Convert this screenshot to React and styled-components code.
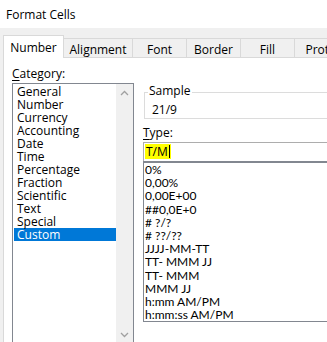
import React from 'react';
import styled, { createGlobalStyle } from 'styled-components';

const Global = createGlobalStyle`
  html, body { margin: 0; padding: 0; background: #fff; overflow: hidden; }
  body {
    font-family: "Open Sans", "Noto Sans", "DejaVu Sans", sans-serif;
    font-size: 12px;
    color: #000;
  }
`;

const Window = styled.div`
  width: 420px;
  height: 342px;
  display: flex;
  flex-direction: column;
  background: #f0f0f0;
`;

const TitleBar = styled.div`
  height: 28px;
  flex: none;
  background: #fff;
  padding-left: 6px;
  display: flex;
  align-items: center;
  font-size: 12px;
`;

const Body = styled.div`
  flex: 1;
  min-height: 0;
  padding: 7px 0 0 3px;
  display: flex;
  flex-direction: column;
`;

const Tabs = styled.div`
  display: flex;
  align-items: flex-end;
  height: 22px;
  flex: none;
  position: relative;
  z-index: 1;
`;

const Tab = styled.div`
  box-sizing: border-box;
  flex: none;
  width: ${p => p.$w}px;
  height: ${p => (p.$active ? 23 : 19)}px;
  margin-bottom: ${p => (p.$active ? -1 : 0)}px;
  background: ${p => (p.$active ? '#fff' : '#f0f0f0')};
  border-top: 1px solid #d9d9d9;
  border-right: 1px solid #d9d9d9;
  border-left: ${p => (p.$first ? '1px solid #d9d9d9' : 'none')};
  display: flex;
  justify-content: center;
  padding-top: ${p => (p.$active ? 4 : 3)}px;
  line-height: 15px;
  white-space: nowrap;
  overflow: hidden;
`;

const Panel = styled.div`
  flex: 1;
  min-height: 0;
  background: #fff;
  border-top: 1px solid #d9d9d9;
  border-left: 1px solid #d9d9d9;
  padding: 8px 0 0 8px;
  display: flex;
  gap: 9px;
`;

const LeftCol = styled.div`
  width: 122px;
  flex: none;
  display: flex;
  flex-direction: column;
`;

const Label = styled.div`
  height: 17px;
  line-height: 15px;
  flex: none;
  u { text-decoration: underline; text-underline-offset: 2px; }
`;

const CategoryBox = styled.div`
  flex: 1;
  box-sizing: border-box;
  border: 1px solid #828790;
  border-bottom: none;
  display: flex;
  min-height: 0;
`;

const CategoryItems = styled.div`
  flex: 1;
  padding: 1px 0 0 1px;
`;

const CategoryItem = styled.div`
  height: 13px;
  line-height: 13px;
  padding-left: 3px;
  background: ${p => (p.$selected ? '#0078d7' : 'transparent')};
  color: ${p => (p.$selected ? '#fff' : '#000')};
  white-space: nowrap;
`;

const ScrollBar = styled.div`
  width: 17px;
  flex: none;
  background: #f0f0f0;
  display: flex;
  flex-direction: column;
  justify-content: space-between;
  align-items: center;
  padding: 6px 0 4px;
`;

const RightCol = styled.div`
  flex: 1;
  display: flex;
  flex-direction: column;
  padding-top: 26px;
`;

const GroupBox = styled.div`
  position: relative;
  box-sizing: border-box;
  height: 27px;
  margin-left: 1px;
  border: 1px solid #dcdcdc;
  padding: 9px 0 0 7px;
  flex: none;
`;

const GroupLegend = styled.span`
  position: absolute;
  top: -10px;
  left: 3px;
  padding: 0 2px 0 1px;
  line-height: 15px;
  background: #fff;
`;

const SampleValue = styled.div`
  line-height: 15px;
`;

const TypeLabel = styled(Label)`
  margin-top: 6px;
`;

const TypeInput = styled.div`
  box-sizing: border-box;
  height: 19px;
  flex: none;
  border: 1px solid #adadad;
  border-bottom: none;
  padding: 1px 0 0 1px;
  display: flex;
  align-items: flex-start;
`;

const Highlight = styled.span`
  background: #ffff00;
  height: 15px;
  line-height: 15px;
  padding: 0 1px 0 1px;
  display: inline-flex;
  align-items: center;
`;

const Caret = styled.span`
  display: inline-block;
  width: 1px;
  height: 13px;
  background: #000;
  margin-left: 1px;
`;

const TypeList = styled.div`
  box-sizing: border-box;
  height: 161px;
  flex: none;
  border: 1px solid #828790;
  border-top-width: 2px;
  padding: 0 0 0 1px;
  font-family: Lato, "Open Sans", sans-serif;
`;

const TypeItem = styled.div`
  height: 13.2px;
  line-height: 13.2px;
  white-space: nowrap;
`;

const Chevron = ({ up }) => (
  <svg width="9" height="6" viewBox="0 0 9 6">
    <path
      d={up ? 'M1 5 L4.5 1.5 L8 5' : 'M1 1 L4.5 4.5 L8 1'}
      fill="none"
      stroke="#a0a0a0"
      strokeWidth="1.3"
    />
  </svg>
);

const tabs = [
  { label: 'Number', w: 61 },
  { label: 'Alignment', w: 69 },
  { label: 'Font', w: 54 },
  { label: 'Border', w: 54 },
  { label: 'Fill', w: 54 },
  { label: 'Protection', w: 80 },
];

const categories = [
  'General', 'Number', 'Currency', 'Accounting', 'Date', 'Time',
  'Percentage', 'Fraction', 'Scientific', 'Text', 'Special', 'Custom',
];

const types = [
  '0%', '0,00%', '0,00E+00', '##0,0E+0', '# ?/?', '# ??/??',
  'JJJJ-MM-TT', 'TT- MMM JJ', 'TT- MMM', 'MMM JJ', 'h:mm AM/PM', 'h:mm:ss AM/PM',
];

export default function App() {
  return (
    <>
      <Global />
      <Window>
        <TitleBar>Format Cells</TitleBar>
        <Body>
          <Tabs>
            {tabs.map((t, i) => (
              <Tab key={t.label} $w={t.w} $active={i === 0} $first={i === 0}>
                {t.label}
              </Tab>
            ))}
          </Tabs>
          <Panel>
            <LeftCol>
              <Label><u>C</u>ategory:</Label>
              <CategoryBox>
                <CategoryItems>
                  {categories.map(c => (
                    <CategoryItem key={c} $selected={c === 'Custom'}>{c}</CategoryItem>
                  ))}
                </CategoryItems>
                <ScrollBar>
                  <Chevron up />
                  <Chevron />
                </ScrollBar>
              </CategoryBox>
            </LeftCol>
            <RightCol>
              <GroupBox>
                <GroupLegend>Sample</GroupLegend>
                <SampleValue>21/9</SampleValue>
              </GroupBox>
              <TypeLabel><u>T</u>ype:</TypeLabel>
              <TypeInput>
                <Highlight>T/M<Caret /></Highlight>
              </TypeInput>
              <TypeList>
                {types.map(t => (
                  <TypeItem key={t}>{t}</TypeItem>
                ))}
              </TypeList>
            </RightCol>
          </Panel>
        </Body>
      </Window>
    </>
  );
}
